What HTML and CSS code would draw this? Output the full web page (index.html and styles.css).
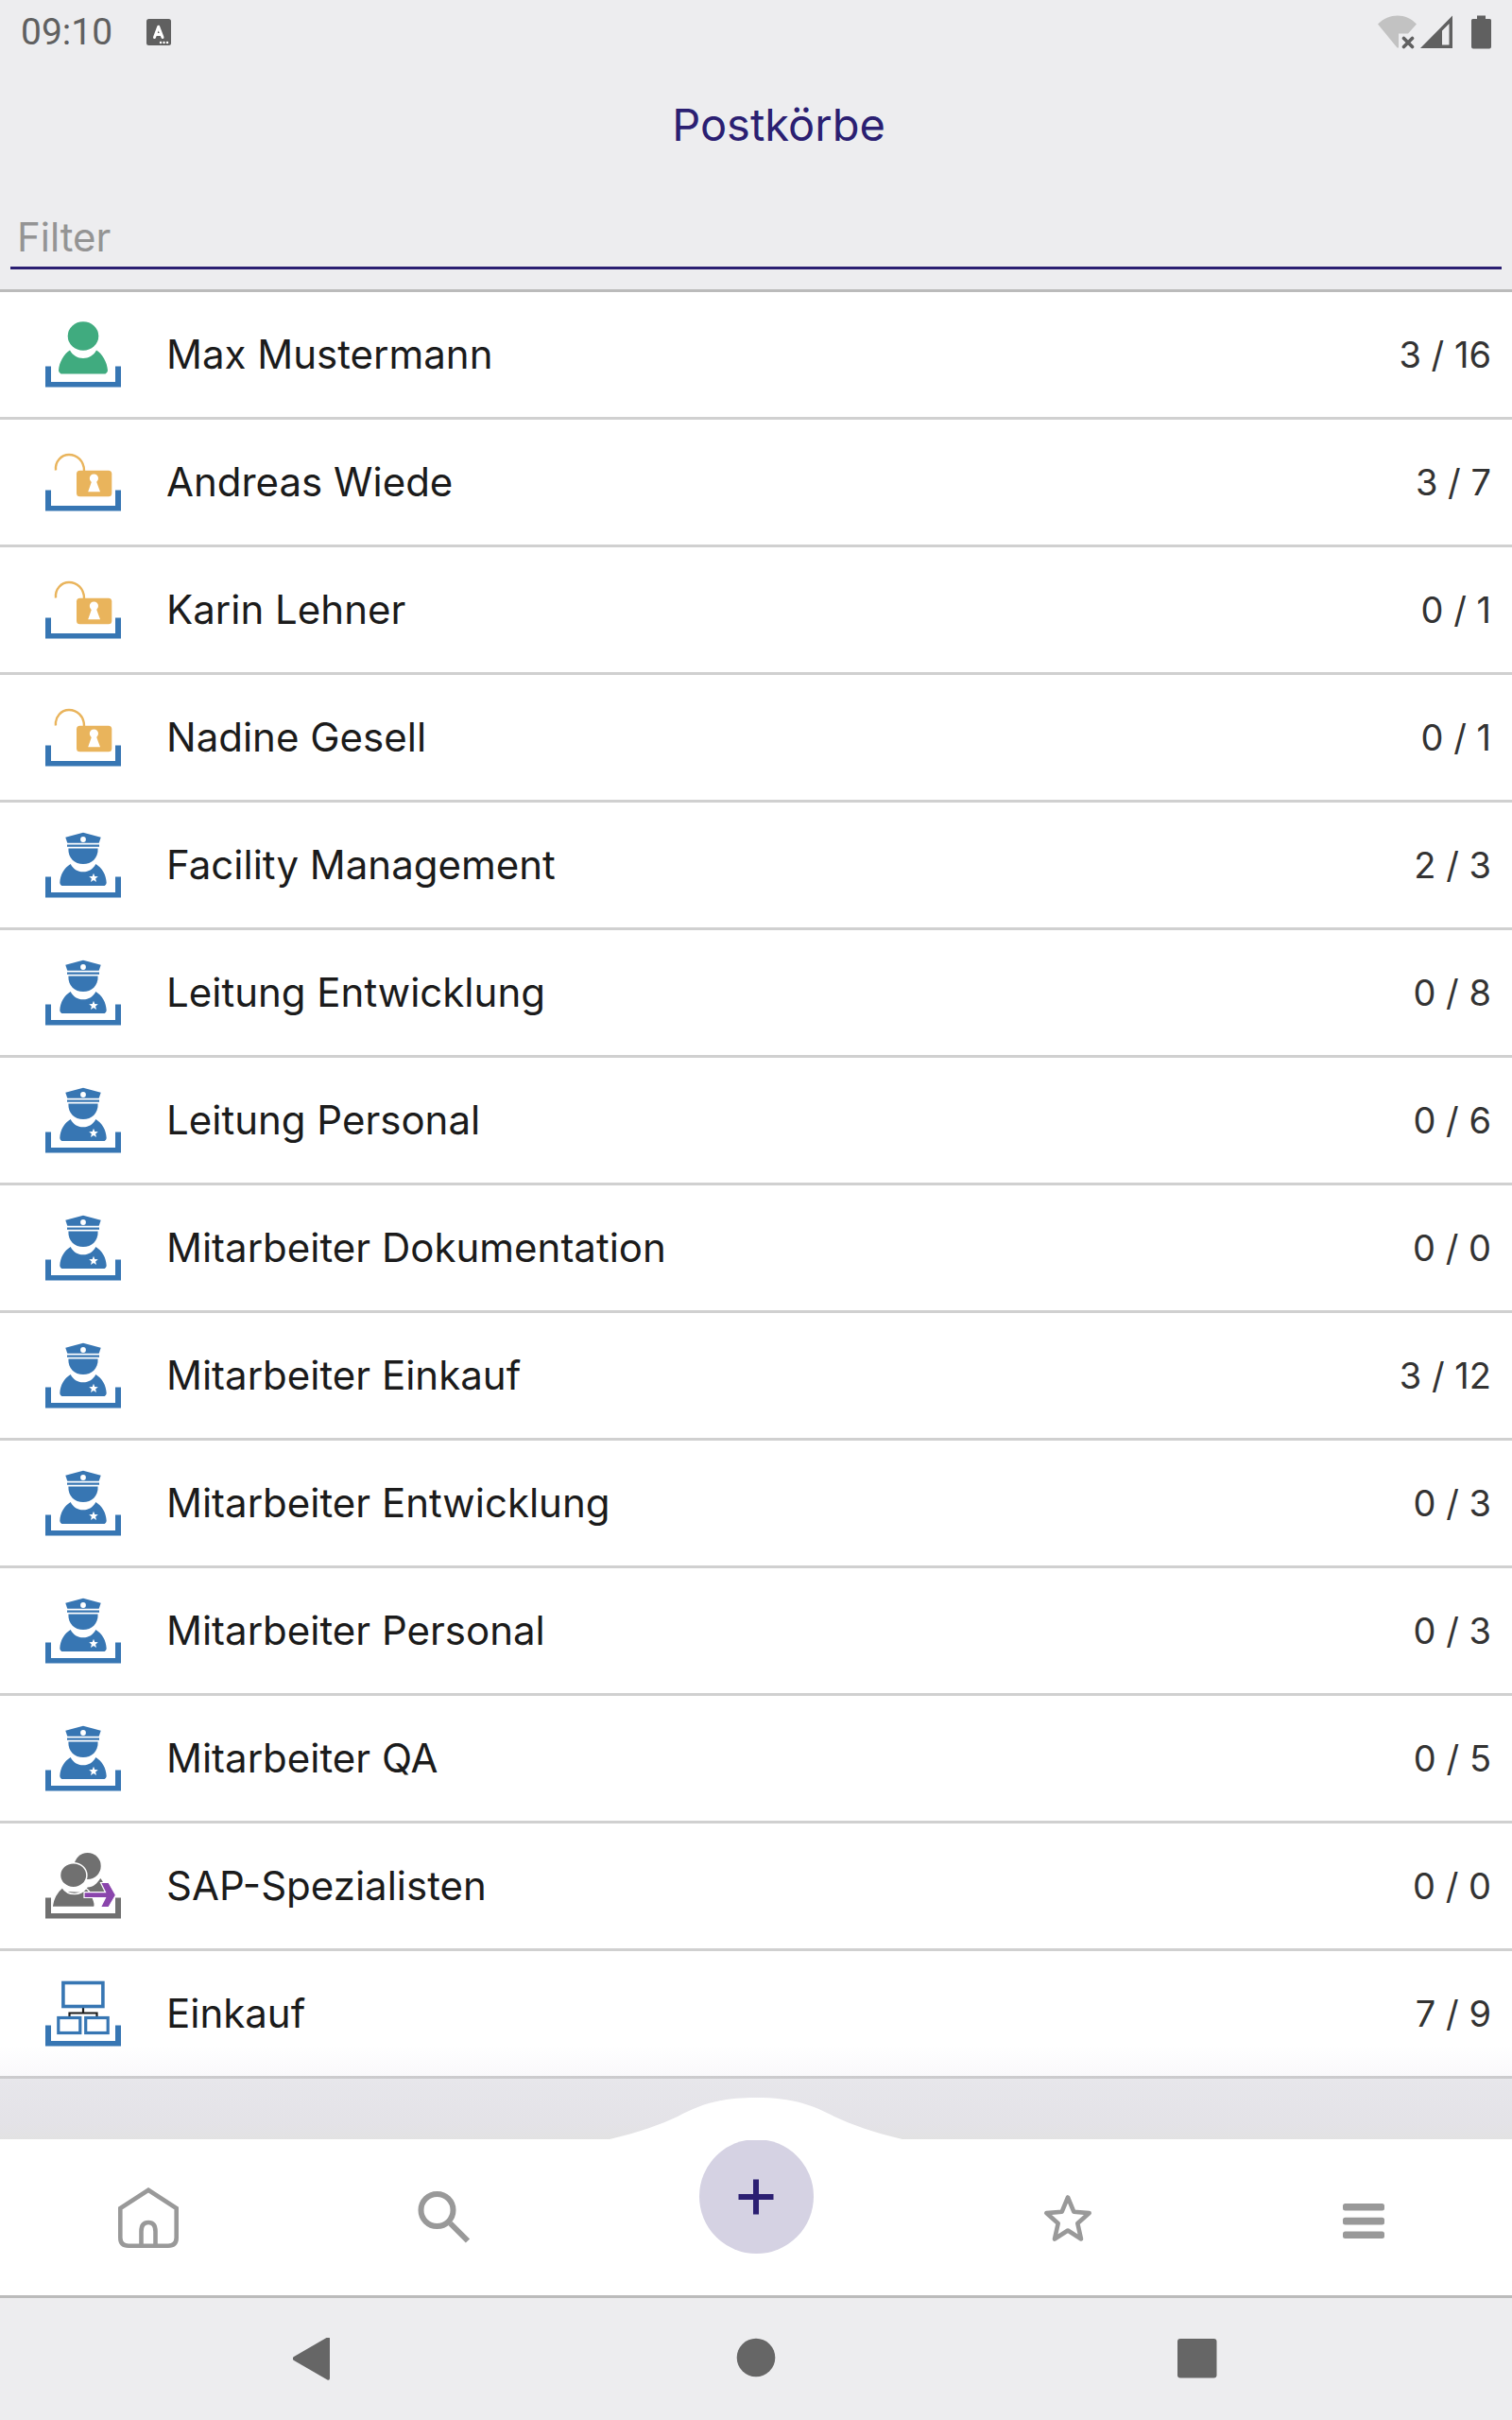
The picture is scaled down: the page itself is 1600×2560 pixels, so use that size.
FILE: index.html
```html
<!DOCTYPE html>
<html lang="de">

<head>
    <meta charset="UTF-8">
    <meta name="viewport" content="width=device-width, initial-scale=1.0">
    <title>Postkörbe</title>
    <link rel="stylesheet" href="styles.css">
</head>

<body>
    <!-- row icons -->
    <svg class="sprite" aria-hidden="true">
        <symbol id="tray" viewBox="0 0 80 70">
            <path fill="currentColor" d="M0 47.5h6V64h68V47.5h6v22H0z"/>
        </symbol>
        <symbol id="icon-user" viewBox="0 0 80 70">
            <use href="#tray"/>
            <g fill="#40ab7f">
                <ellipse cx="40" cy="15.5" rx="16.3" ry="15.2"/>
                <path d="M26 30.5C20 34 14.5 43 14 52q0 1.5 2.5 3.5h47q2.5-2 2.5-3.5C65.5 43 60 34 54 30.5 51 36 46 39 40 39s-11-3-14-8.5z"/>
            </g>
        </symbol>
        <symbol id="icon-lock" viewBox="0 0 80 70">
            <path fill="currentColor" d="M0 43.5h6V60h68V43.5h6v22H0z"/>
            <path d="M11 22.5C10 13 17 6 25 6s16 6 16 17" fill="none" stroke="#e9b45c" stroke-width="2.4"/>
            <rect x="33" y="22.7" width="37.3" height="27.6" rx="3.5" fill="#e9b45c"/>
            <circle cx="51.4" cy="31" r="4.6" fill="#fff"/>
            <path d="M49.5 33h4l4.5 12.3H45.2z" fill="#fff"/>
        </symbol>
        <symbol id="icon-role" viewBox="0 0 80 70">
            <use href="#tray"/>
            <g fill="currentColor">
                <path d="M21.3 5.7 40 .7l18.7 5-2 6H23.3z"/>
                <path d="M23 13.5h34v2.2H23z"/>
                <path d="M24.4 17.5h31.2C56 28 49 34 40 34s-16-6-15.6-16.5z"/>
                <path d="M26.7 34C20 38 15.7 45 15.3 54q.3 2 2 3h45.4q1.7-1 2-3c-.4-9-4.7-16-11.4-20C50.5 39.5 46 42.3 40 42.3S29.5 39.5 26.7 34z"/>
            </g>
            <circle cx="40" cy="8" r="2.9" fill="#fff"/>
            <path d="m51 43.7 1.3 3.4 3.5.2-2.7 2.3.9 3.5-3-2-3 2 .9-3.5-2.7-2.3 3.5-.2z" fill="#fff"/>
        </symbol>
        <symbol id="icon-group" viewBox="0 0 80 70">
            <use href="#tray"/>
            <g fill="currentColor">
                <circle cx="44.7" cy="14" r="14"/>
                <path d="M22.7 41c3 3 10 3.5 16 1l6-5.5c6 0 10-4 13.5-9.5 3 3 5 9 5 15H41z"/>
            </g>
            <g fill="currentColor" stroke="#fff" stroke-width="1.5">
                <path d="M18 36.5c-6 5-10 12-11 21h44.5c1.5-1.5 1-4-.5-8-1.5-5-4-9-8-12-3 4-7 6-12 6s-10-2-13-7z"/>
                <ellipse cx="29.7" cy="23.7" rx="14.2" ry="13"/>
            </g>
            <path d="M41 41.7h22.5L58.5 31.5H67l7.5 13.2L67 57.5h-8.500l5-10H41z" fill="#8a45ac" stroke="#fff" stroke-width="1.2"/>
        </symbol>
        <symbol id="icon-org" viewBox="0 0 80 70">
            <use href="#tray"/>
            <path d="M40 29v5M25.5 39v-4.5h29V39" fill="none" stroke="#1d1d1d" stroke-width="2.2"/>
            <g fill="none" stroke="currentColor">
                <rect x="18.9" y="2.5" width="42" height="25" stroke-width="3.6"/>
                <rect x="13.8" y="39.5" width="23" height="16" stroke-width="3.2"/>
                <rect x="42.7" y="39.5" width="23.5" height="16" stroke-width="3.2"/>
            </g>
        </symbol>
    </svg>

    <div class="app">
        <header class="header">
            <div class="status">
                <span class="time">09:10</span>
                <svg class="status-app" viewBox="0 0 26 28" width="26" height="28">
                    <rect width="26" height="28" rx="2.5" fill="#606060"/>
                    <path d="m8.500 19.500 4.200-11.300 4.300 11.300M10 16.500h5.500" fill="none" stroke="#fff" stroke-width="3" stroke-linecap="round" stroke-linejoin="round"/>
                    <path d="M15 25h.1m3.400 0h.1m3.400 0h.1" stroke="#fff" stroke-width="2.4" stroke-linecap="round"/>
                </svg>
                <svg class="status-icons" viewBox="0 0 120 36" width="120" height="36">
                    <path d="M0 9.500C12-2.500 30-2.500 41 9.500l-9 10h-10V34.500h-1.500z" fill="#c2c2c2"/>
                    <path d="m27.500 24.500 9 9m0-9-9 9" stroke="#606060" stroke-width="3.6" stroke-linecap="round"/>
                    <path fill-rule="evenodd" d="M45 35 79 .5V35zM68 16.500V31.500h7.500V9z" fill="#606060"/>
                    <path d="M105 .5h9V4h4.500q1.500 0 1.500 1.500v28q0 2-2 2h-17q-2 0-2-2v-28Q99 4 100.500 4h4.500z" fill="#606060"/>
                </svg>
            </div>
            <h1 class="title">Postkörbe</h1>
            <input class="filter" type="text" placeholder="Filter" aria-label="Filter">
        </header>

        <main class="content">
            <ul class="list">
                <li><a class="row" href="#"><svg class="icon"><use href="#icon-user"/></svg><span class="name">Max Mustermann</span><span class="count">3 / 16</span></a></li>
                <li><a class="row" href="#"><svg class="icon"><use href="#icon-lock"/></svg><span class="name">Andreas Wiede</span><span class="count">3 / 7</span></a></li>
                <li><a class="row" href="#"><svg class="icon"><use href="#icon-lock"/></svg><span class="name">Karin Lehner</span><span class="count">0 / 1</span></a></li>
                <li><a class="row" href="#"><svg class="icon"><use href="#icon-lock"/></svg><span class="name">Nadine Gesell</span><span class="count">0 / 1</span></a></li>
                <li><a class="row" href="#"><svg class="icon"><use href="#icon-role"/></svg><span class="name">Facility Management</span><span class="count">2 / 3</span></a></li>
                <li><a class="row" href="#"><svg class="icon"><use href="#icon-role"/></svg><span class="name">Leitung Entwicklung</span><span class="count">0 / 8</span></a></li>
                <li><a class="row" href="#"><svg class="icon"><use href="#icon-role"/></svg><span class="name">Leitung Personal</span><span class="count">0 / 6</span></a></li>
                <li><a class="row" href="#"><svg class="icon"><use href="#icon-role"/></svg><span class="name">Mitarbeiter Dokumentation</span><span class="count">0 / 0</span></a></li>
                <li><a class="row" href="#"><svg class="icon"><use href="#icon-role"/></svg><span class="name">Mitarbeiter Einkauf</span><span class="count">3 / 12</span></a></li>
                <li><a class="row" href="#"><svg class="icon"><use href="#icon-role"/></svg><span class="name">Mitarbeiter Entwicklung</span><span class="count">0 / 3</span></a></li>
                <li><a class="row" href="#"><svg class="icon"><use href="#icon-role"/></svg><span class="name">Mitarbeiter Personal</span><span class="count">0 / 3</span></a></li>
                <li><a class="row" href="#"><svg class="icon"><use href="#icon-role"/></svg><span class="name">Mitarbeiter QA</span><span class="count">0 / 5</span></a></li>
                <li><a class="row" href="#"><svg class="icon icon-gray"><use href="#icon-group"/></svg><span class="name">SAP-Spezialisten</span><span class="count">0 / 0</span></a></li>
                <li><a class="row" href="#"><svg class="icon"><use href="#icon-org"/></svg><span class="name">Einkauf</span><span class="count">7 / 9</span></a></li>
            </ul>
        </main>

        <nav class="tabs">
            <svg class="hump" viewBox="0 0 310 45" width="310" height="45" aria-hidden="true">
                <path d="M0 44C30 37 55 28 72 20 95 8 115 0 155 0s60 8 83 20c17 8 42 17 72 24v1H0z" fill="#fff"/>
            </svg>
            <a class="tab" href="#" aria-label="Start">
                <svg viewBox="0 0 64 64" width="64" height="64" fill="none" stroke="#999" stroke-width="4.600">
                    <path d="M32 2.800 61.700 22v31q0 8.700-8.700 8.700H11q-8.700 0-8.700-8.700V22z"/>
                    <path d="M24.500 61V46.500q0-9.500 7.500-9.500t7.500 9.500V61"/>
                </svg>
            </a>
            <a class="tab" href="#" aria-label="Suche">
                <svg viewBox="0 0 64 64" width="64" height="64" fill="none" stroke="#999" stroke-width="6">
                    <circle cx="24.500" cy="24" r="17"/>
                    <path d="m38.500 38 18.500 18.500"/>
                </svg>
            </a>
            <button class="add" type="button" aria-label="Neu">
                <svg viewBox="0 0 38 38" width="38" height="38" stroke="#2b1f72" stroke-width="6"><path d="M19 .5v37M.5 19h37"/></svg>
            </button>
            <a class="tab" href="#" aria-label="Favoriten">
                <svg viewBox="0 0 64 64" width="64" height="64" fill="none" stroke="#999" stroke-width="4.600" stroke-linejoin="round">
                    <path d="m32 10.500 6.300 15.200 16.400 1.400L42.300 38l3.700 16.500L32 45.500l-14 9L21.700 38 9.300 27.100l16.400-1.400z"/>
                </svg>
            </a>
            <a class="tab" href="#" aria-label="Menü">
                <svg viewBox="0 0 64 64" width="64" height="64" fill="#999">
                    <rect x="10" y="17" width="44" height="7.600" rx="2.500"/>
                    <rect x="10" y="31.800" width="44" height="7.600" rx="2.500"/>
                    <rect x="10" y="46.500" width="44" height="7.600" rx="2.500"/>
                </svg>
            </a>
        </nav>

        <div class="navbar">
            <button type="button" aria-label="Zurück"><svg viewBox="0 0 46 46" width="46" height="46"><path d="M36-.3q3-1.500 3 1.500v41.600q0 3-3 1.500L1 24q-2.500-2 0-4z"/></svg></button>
            <button type="button" aria-label="Startbildschirm"><svg viewBox="0 0 46 46" width="46" height="46"><circle cx="23" cy="21" r="20.300"/></svg></button>
            <button type="button" aria-label="Übersicht"><svg viewBox="0 0 46 46" width="46" height="46"><rect x="2" y="1" width="41.500" height="41.500" rx="3"/></svg></button>
        </div>
    </div>
</body>

</html>
```

FILE: styles.css
```css
:root {
    --bar: #ededef;
    --accent: #2b1f72;
    --blue: #3776b3;
}

* {
    box-sizing: border-box;
}

body {
    margin: 0;
    background: var(--bar);
    color: #1b1b1b;
    font-family: Inter, "Liberation Sans", sans-serif;
}

button {
    border: 0;
    padding: 0;
    background: none;
}

.sprite {
    position: absolute;
    width: 0;
    height: 0;
}

.app {
    display: flex;
    flex-direction: column;
    min-height: 100vh;
}

/* Header */
.header {
    display: flex;
    flex-direction: column;
    background: var(--bar);
    border-bottom: 3px solid #bbb;
}

.status {
    display: flex;
    align-items: center;
    height: 68px;
    padding: 0 22px;
}

.time {
    font-family: Roboto, sans-serif;
    font-size: 39px;
    line-height: 48px;
    color: #606060;
}

.status-app {
    margin-left: 36px;
}

.status-icons {
    margin-left: auto;
}

.title {
    margin: 0;
    padding: 30px 0 0 48px;
    font-size: 47px;
    font-weight: 400;
    line-height: 68px;
    text-align: center;
    color: var(--accent);
}

.filter {
    height: 66px;
    margin: 53px 11px 21px;
    padding: 0 7px;
    border: 0;
    border-bottom: 3px solid var(--accent);
    outline: 0;
    background: none;
    font-family: inherit;
    font-size: 42px;
    color: #1b1b1b;
}

.filter::placeholder {
    color: #949494;
    opacity: 1;
}

/* List */
.content {
    flex: 1;
    padding-bottom: 64px;
    background: var(--bar);
}

.list {
    margin: 0;
    padding: 0;
    list-style: none;
}

.row {
    display: flex;
    align-items: center;
    gap: 48px;
    height: 135px;
    padding: 0 22px 0 48px;
    border-bottom: 3px solid #d0d0d0;
    background: #fff;
    color: inherit;
    text-decoration: none;
}

.icon {
    flex: none;
    width: 80px;
    height: 70px;
    color: var(--blue);
}

.icon-gray {
    color: #707070;
}

.name {
    flex: 1;
    font-size: 42px;
    line-height: 56px;
}

.count {
    font-size: 38px;
    line-height: 56px;
    color: #333;
}

/* Bottom tabs */
.tabs {
    position: relative;
    display: grid;
    grid-template-columns: 1fr 1fr 346px 1fr 1fr;
    justify-items: center;
    height: 168px;
    border-bottom: 3px solid #bbb;
    background: #fff;
}

.tabs::before {
    content: "";
    position: absolute;
    right: 0;
    bottom: 100%;
    left: 0;
    height: 100px;
    background: linear-gradient(rgba(80, 60, 130, 0), rgba(80, 60, 130, 0.04) 40%, rgba(80, 60, 110, 0.06) 84%, rgba(30, 30, 0, 0.05));
}

.hump {
    position: absolute;
    bottom: calc(100% - 1px);
    left: 50%;
    transform: translateX(-50%);
}

.tab {
    display: flex;
    align-items: center;
}

.add {
    display: flex;
    align-items: center;
    justify-content: center;
    width: 121px;
    height: 121px;
    border-radius: 50%;
    background: #d5d2e3;
}

/* System navigation */
.navbar {
    display: grid;
    grid-template-columns: repeat(3, 1fr);
    align-items: center;
    justify-items: center;
    height: 129px;
    padding: 0 100px;
    background: var(--bar);
    fill: #666;
}

.navbar svg {
    display: block;
}
```
